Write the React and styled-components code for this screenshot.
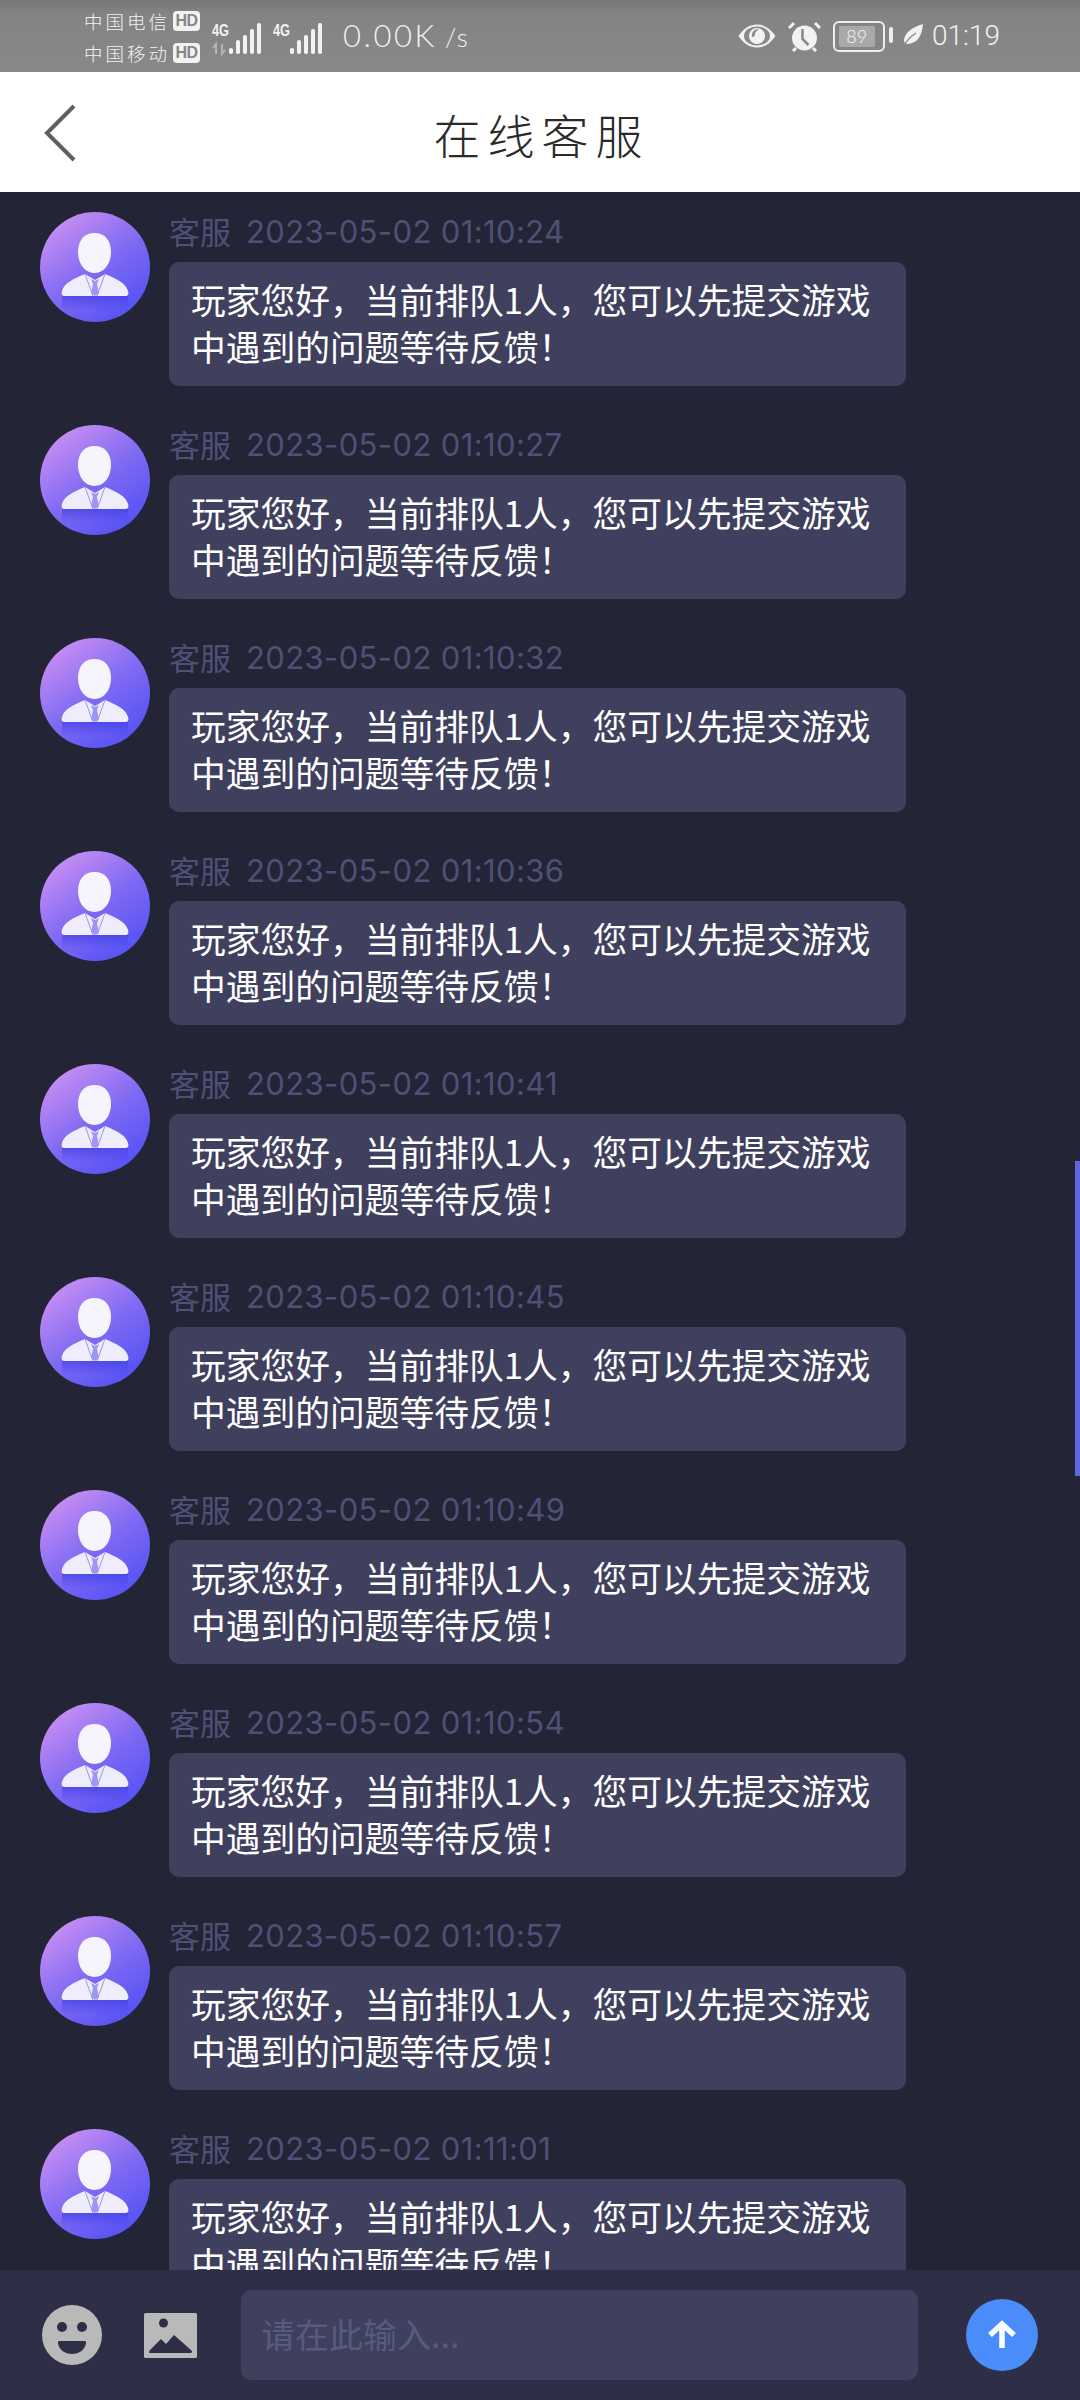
import React from "react";
import styled, { createGlobalStyle } from "styled-components";

const times = ["01:10:24", "01:10:27", "01:10:32", "01:10:36", "01:10:41", "01:10:45", "01:10:49", "01:10:54", "01:10:57", "01:11:01"];

const GlobalStyle = createGlobalStyle`
  html, body {
    margin: 0;
    padding: 0;
    background: #232436;
  }
  * {
    box-sizing: border-box;
  }
`;

const Page = styled.div`
  width: 1080px;
  height: 2400px;
  display: flex;
  flex-direction: column;
  overflow: hidden;
  font-family: "Noto Sans CJK SC", "Noto Sans", sans-serif;
`;

const StatusBar = styled.div`
  height: 72px;
  flex: none;
  display: flex;
  align-items: center;
  padding: 0 80px 0 84px;
  color: #f2f2f2;
  background: linear-gradient(#777 0, #848484 14px, #888 100%);
`;
const Carriers = styled.div`
  display: flex;
  flex-direction: column;
  gap: 10px;
  margin-top: 2px;
`;
const Carrier = styled.div`
  display: flex;
  align-items: center;
  height: 22px;
  font-size: 18.5px;
  font-weight: 300;
  letter-spacing: 3px;
  white-space: nowrap;
`;
const HdBadge = styled.span`
  width: 27px;
  height: 20px;
  margin-left: 3px;
  border-radius: 4px;
  background: #f2f2f2;
  color: #868686;
  font: 700 16px/20px "Liberation Sans", sans-serif;
  letter-spacing: -0.5px;
  text-align: center;
`;
const Signal = styled.svg`
  flex: none;
  margin-left: ${(p) => p.$gap}px;
  margin-top: 5px;
`;
const Speed = styled.div`
  margin-left: 20px;
  font: 300 31px/36px Lato, "Liberation Sans", sans-serif;
  letter-spacing: 2.6px;
  white-space: nowrap;
  small {
    font-size: 26px;
    margin-left: 8px;
    letter-spacing: 1.5px;
  }
`;
const StatusRight = styled.div`
  margin-left: auto;
  display: flex;
  align-items: center;
  gap: 12px;
`;
const Battery = styled.div`
  width: 52px;
  height: 31px;
  padding: 3px 4px;
  border: 2.5px solid #eee;
  border-radius: 6px;
  position: relative;
  &::after {
    content: "";
    position: absolute;
    right: -10px;
    top: 4px;
    width: 4px;
    height: 16px;
    border-radius: 2px;
    background: #eee;
  }
`;
const BatteryFill = styled.div`
  width: ${(p) => p.$level}%;
  height: 100%;
  border-radius: 2px;
  background: #a9a9a9;
  color: #f4f4f4;
  font: 300 18px/20px Lato, "Liberation Sans", sans-serif;
  text-align: center;
`;
const Clock = styled.div`
  margin-left: -3px;
  font: 300 28px/34px Roboto, "Liberation Sans", sans-serif;
`;

const Header = styled.header`
  height: 120px;
  flex: none;
  background: #fff;
  position: relative;
  display: flex;
  align-items: center;
  justify-content: center;
`;
const BackButton = styled.svg`
  position: absolute;
  left: 42px;
  top: 31px;
`;
const Title = styled.h1`
  margin: 2px 0 0 3px;
  font-size: 47px;
  font-weight: 300;
  letter-spacing: 7px;
  color: #2a2a2a;
`;

const ChatList = styled.main`
  flex: 1;
  min-height: 0;
  position: relative;
  overflow: hidden;
  padding: 20px 0 0 40px;
  background: #232436;
`;
const ScrollThumb = styled.div`
  position: absolute;
  right: 0;
  top: 969px;
  width: 5px;
  height: 315px;
  background: #5b68e0;
`;
const MessageRow = styled.div`
  height: 213px;
  display: flex;
  align-items: flex-start;
  gap: 19px;
`;
const Avatar = styled.svg`
  flex: none;
`;
const MessageBody = styled.div`
  width: 737px;
`;
const Meta = styled.div`
  height: 50px;
  display: flex;
  align-items: center;
  gap: 15px;
  padding-bottom: 12px;
  font-size: 31px;
  color: #4e5176;
  white-space: nowrap;
  span {
    margin-top: -2px;
  }
  time {
    font-family: Inter, "Noto Sans", sans-serif;
    font-size: 31px;
    letter-spacing: 0.38px;
  }
`;
const Bubble = styled.div`
  height: 124px;
  padding: 14px 22px;
  border-radius: 10px;
  background: #3f405e;
  color: #fff;
  font-size: 34.75px;
  line-height: 47px;
`;

const InputBar = styled.footer`
  height: 130px;
  flex: none;
  display: flex;
  align-items: center;
  padding: 0 42px 0 42px;
  background: #2e2f46;
`;
const ToolIcon = styled.svg`
  flex: none;
  margin-right: ${(p) => p.$gap}px;
`;
const InputBox = styled.div`
  flex: 1;
  height: 90px;
  display: flex;
  align-items: center;
  padding: 0 20px 4px;
  border-radius: 10px;
  background: #3f405e;
  color: #585a80;
  font-size: 34px;
`;
const SendButton = styled.button`
  flex: none;
  width: 72px;
  height: 72px;
  margin-left: 48px;
  padding: 0;
  border: 0;
  border-radius: 50%;
  display: flex;
  align-items: center;
  justify-content: center;
  background: #4b8cfb;
`;

const barHeights = [6, 14, 19, 25, 31];

const CarrierBars = ({ gap, arrows }) => (
  <Signal $gap={gap} width="50" height="34" viewBox="0 0 50 34">
    <text x="0" y="14" fontFamily="Liberation Sans, sans-serif" fontWeight="700" fontSize="17" fill="#f2f2f2" textLength="17" lengthAdjust="spacingAndGlyphs">4G</text>
    {arrows && <path d="M4 32V22l-3 4M10 22v10l3-4" fill="none" stroke="#b4b4b4" strokeWidth="2" />}
    <g fill="#f2f2f2">
      {barHeights.map((h, i) => (
        <rect key={h} x={17 + i * 7} y={32 - h} width="4" height={h} rx="1.8" />
      ))}
    </g>
  </Signal>
);

const EyeIcon = () => (
  <svg width="38" height="24" viewBox="0 0 38 24">
    <path d="M0.5 12C6 4 12 0.5 19 0.5S32 4 37.500 12C32 20 26 23.500 19 23.500S6 20 0.5 12z" fill="#f2f2f2" />
    <ellipse cx="19" cy="12" rx="13" ry="9.500" fill="#8a8a8a" />
    <circle cx="19" cy="12" r="8" fill="#f2f2f2" />
    <path d="M21 5a6.500 6.500 0 0 0-7 8c2 0 3-1 3-3s2-3 4-5z" fill="#8a8a8a" />
  </svg>
);

const AlarmIcon = () => (
  <svg width="33" height="31" viewBox="0 0 33 31">
    <circle cx="16.500" cy="17" r="12.500" fill="#f2f2f2" />
    <path d="M1 7l5-5M32 7l-5-5M8 27l-3 3M25 27l3 3" stroke="#f2f2f2" strokeWidth="3" />
    <path d="M14.500 8v10l6 6" fill="none" stroke="#888" strokeWidth="2.500" />
  </svg>
);

const LeafIcon = () => (
  <svg width="21" height="24" viewBox="0 0 21 24" style={{ marginLeft: 5 }}>
    <path d="M21 0C20 11 16 19 6 20 4 20 2 19 2 16 3 8 11 3 21 0z" fill="#f2f2f2" />
    <path d="M0.5 24C4 17 8 13 14 9" fill="none" stroke="#8a8a8a" strokeWidth="1.500" />
  </svg>
);

const AgentAvatar = ({ id }) => (
  <Avatar width="110" height="110" viewBox="0 0 110 110">
    <defs>
      <linearGradient id={`face${id}`} x1="0.15" y1="0.1" x2="0.75" y2="0.9">
        <stop offset="0" stopColor="#c68df3" />
        <stop offset="0.55" stopColor="#7f6af3" />
        <stop offset="1" stopColor="#5a55f5" />
      </linearGradient>
      <linearGradient id={`band${id}`} x1="0" y1="0" x2="0" y2="1">
        <stop offset="0" stopColor="#4643e6" stopOpacity="0.75" />
        <stop offset="1" stopColor="#4643e6" stopOpacity="0" />
      </linearGradient>
    </defs>
    <circle cx="55" cy="55" r="55" fill={`url(#face${id})`} />
    <rect x="22" y="84" width="66" height="14" fill={`url(#band${id})`} />
    <path d="M54.500 21c11 0 16.500 8 16.500 19 0 12-7 21-16.500 21S38 52 38 40c0-11 5.500-19 16.500-19z" fill="#f6f5fd" />
    <path d="M25 84c-3 0-4-2-3-5 2-8 11-12 23-17l10 6 10-6c12 5 21 9 23 17 1 3 0 5-3 5z" fill="#efedfb" />
    <path d="M45 62l8 22M65 62l-8 22" stroke="#9b94f3" strokeWidth="1" />
    <path d="M51 67l4 2 4-2-2 5 2 9-4 3-4-3 2-9z" fill="#9d96f4" />
  </Avatar>
);

const App = () => {
  return (
    <Page>
      <GlobalStyle />
      <StatusBar>
        <Carriers>
          <Carrier>中国电信<HdBadge>HD</HdBadge></Carrier>
          <Carrier>中国移动<HdBadge>HD</HdBadge></Carrier>
        </Carriers>
        <CarrierBars gap={12} arrows />
        <CarrierBars gap={11} />
        <Speed>0.00K<small>/s</small></Speed>
        <StatusRight>
          <EyeIcon />
          <AlarmIcon />
          <Battery><BatteryFill $level={89}>89</BatteryFill></Battery>
          <LeafIcon />
          <Clock>01:19</Clock>
        </StatusRight>
      </StatusBar>

      <Header>
        <BackButton width="36" height="60" viewBox="0 0 36 60">
          <path d="M32 3L5 30l27 27" fill="none" stroke="#5f5f5f" strokeWidth="4" />
        </BackButton>
        <Title>在线客服</Title>
      </Header>

      <ChatList>
        {times.map((t, i) => (
          <MessageRow key={t}>
            <AgentAvatar id={i} />
            <MessageBody>
              <Meta>
                <span>客服</span>
                <time>2023-05-02 {t}</time>
              </Meta>
              <Bubble>玩家您好，当前排队1人，您可以先提交游戏中遇到的问题等待反馈！</Bubble>
            </MessageBody>
          </MessageRow>
        ))}
        <ScrollThumb />
      </ChatList>

      <InputBar>
        <ToolIcon $gap={42} width="60" height="60" viewBox="0 0 60 60">
          <circle cx="30" cy="30" r="30" fill="#b9b9b9" />
          <circle cx="20" cy="22" r="5" fill="#2e2f46" />
          <circle cx="40" cy="22" r="5" fill="#2e2f46" />
          <path d="M17 36h26c1 0 1 1 1 2-1 7-7 11-14 11s-13-4-14-11c0-1 0-2 1-2z" fill="#2e2f46" />
        </ToolIcon>
        <ToolIcon $gap={44} width="53" height="45" viewBox="0 0 53 45">
          <rect width="53" height="45" rx="1.5" fill="#b9b9b9" />
          <circle cx="19.500" cy="10" r="4.500" fill="#2e2f46" />
          <path d="M5 40c0-1 0-2 1-3l11-11 5 5 8-9 17 15c2 2 1 3-1 3H6z" fill="#2e2f46" />
        </ToolIcon>
        <InputBox>请在此输入...</InputBox>
        <SendButton aria-label="send">
          <svg width="30" height="30" viewBox="0 0 30 30">
            <path d="M15 28V5M3 15L15 4l12 11" fill="none" stroke="#fff" strokeWidth="5.500" />
          </svg>
        </SendButton>
      </InputBar>
    </Page>
  );
};

export default App;
